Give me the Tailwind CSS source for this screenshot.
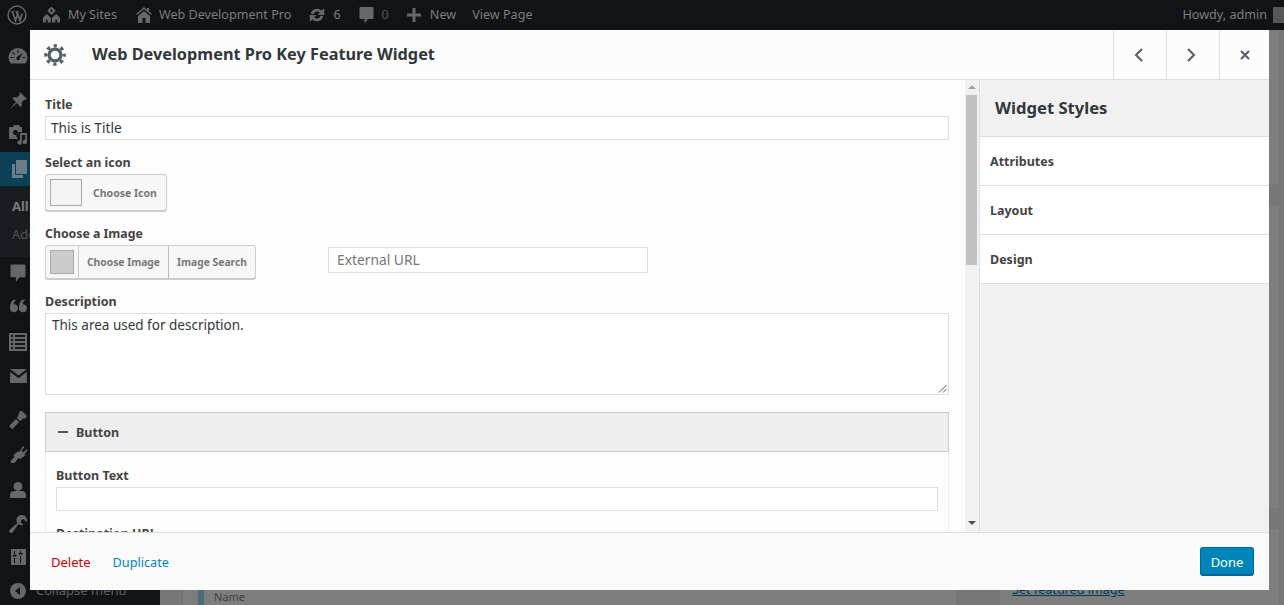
<!DOCTYPE html>
<html lang="en">
<head>
    <meta charset="UTF-8">
    <title>Web Development Pro Key Feature Widget</title>
    <script src="https://cdn.jsdelivr.net/npm/@tailwindcss/browser@4"></script>
</head>
<body class="bg-[#7a7a7a] font-['Noto_Sans',sans-serif] text-[#444]">
<div class="relative h-[605px] w-[1284px] overflow-hidden">

    <!-- admin bar -->
    <header class="flex h-[30px] items-center justify-between bg-[#111417] text-[12.6px] text-[#7a7d80]">
        <div class="flex items-center">
            <svg class="ml-[7px] h-[20px] w-[20px]" viewBox="0 0 20 20" fill="none" stroke="#65686b"><circle cx="10" cy="10" r="9" stroke-width="1.400"/><path d="M5.500 7l3 8.500 2-6-1-2.500M10 7l3 8.500 2.200-7" stroke-width="1.700"/><path d="M4 6.700h3.400M8.400 6.700h3.400" stroke-width="1"/></svg>
            <svg class="ml-[15px] h-[20px] w-[19px]" viewBox="0 0 20 20" fill="#65686b"><path fill-rule="evenodd" d="M10 1l4.500 4.500-4.500 4.500-4.500-4.500zM10 4L8.500 5.500 10 7l1.500-1.500zM5 9l4.300 4v5H1v-5zM4 15v3h2v-3zM15 9l4 4v5h-8.500v-5zM14 15v3h2v-3z"/></svg>
            <span class="ml-[7px]">My Sites</span>
            <svg class="ml-[19px] h-[18px] w-[16px]" viewBox="0 0 16 18" fill="#65686b"><path fill-rule="evenodd" d="M8 1l3 2.600V2h2v3.300l3 2.700-1 1-7-6-7 6-1-1zM8 5l6 5v7H2v-7zM6.500 12v5h3v-5z"/></svg>
            <span class="ml-[7px]">Web Development Pro</span>
            <svg class="ml-[17px] h-[18px] w-[18px]" viewBox="0 0 20 20" fill="#65686b"><path d="M10 3a7 7 0 0 1 5 2.100L18 2.500V10h-7.500l2.700-2.600A4 4 0 0 0 6.300 9H3.200A7 7 0 0 1 10 3zM2 10h7.500l-2.700 2.600A4 4 0 0 0 13.700 11h3.100A7 7 0 0 1 5 14.900L2 17.500z"/></svg>
            <span class="ml-[7px]">6</span>
            <svg class="ml-[18px] h-[18px] w-[15px]" viewBox="0 0 15 18" fill="#65686b"><path d="M1.500 1h12a1 1 0 0 1 1 1v10a1 1 0 0 1-1 1H9l-3.500 4.500V13h-4a1 1 0 0 1-1-1V2a1 1 0 0 1 1-1z"/></svg>
            <span class="ml-[8px] text-[#55585b]">0</span>
            <svg class="ml-[18px] h-[14px] w-[14px]" viewBox="0 0 14 14" fill="#65686b"><path d="M5.500 0h3v5.500H14v3H8.500V14h-3V8.500H0v-3h5.500z"/></svg>
            <span class="ml-[9px]">New</span>
            <span class="ml-[16px]">View Page</span>
        </div>
        <div class="flex items-center">
            <span>Howdy, admin</span>
            <div class="ml-[6px] h-[16px] w-[11px] bg-[#55585b]"></div>
        </div>
    </header>

    <div class="flex h-[575px]">
        <!-- wp sidebar -->
        <aside class="relative w-[160px] shrink-0 bg-[#111417] pt-[9px] text-[#5d6063]">
            <div class="flex h-[34px] items-center pl-[8px]">
                <svg class="h-[20px] w-[20px]" viewBox="0 0 20 20" fill="#65686b"><path fill-rule="evenodd" d="M10 2a9.500 9.500 0 0 1 9.500 9.500c0 2.300-.8 4.300-2.200 6H2.700A9.400 9.400 0 0 1 .5 11.500 9.500 9.500 0 0 1 10 2zM9.500 4v3h1V4zM5 6l-.8.800 2 2 .8-.8zM14.500 7L9 11a1.700 1.700 0 1 0 2.500 2.200zM2.500 11v1h3v-1zM14.500 11v1h3v-1z"/></svg>
            </div>
            <div class="mt-[11px] flex h-[34px] items-center pl-[8px]">
                <svg class="h-[20px] w-[20px]" viewBox="0 0 20 20" fill="#65686b"><path d="M12 1l7 7-1.500 1-1-.5-3 3 .5 3-1.500 1.500L9 12l-7.500 6.500L8 11 4.500 7.500 6 6l3 .5 3-3-.5-1z"/></svg>
            </div>
            <div class="flex h-[34px] items-center pl-[8px]">
                <svg class="h-[22px] w-[20px]" viewBox="0 0 20 22" fill="#65686b"><path fill-rule="evenodd" d="M2 3h3l1-2h5l1 2h2v5h-3a4 4 0 0 0-1 7H2a1 1 0 0 1-1-1V4a1 1 0 0 1 1-1zM7.500 6a2.500 2.500 0 1 0 .01 0zM12 9h7v9a2.200 2.200 0 1 1-1.800-2.200V11h-3.400v7.500a2.200 2.200 0 1 1-1.800-2.200z"/></svg>
            </div>
            <div class="flex h-[34px] items-center bg-[#0b4057] pl-[11px]">
                <svg class="h-[20px] w-[16px]" viewBox="0 0 16 20" fill="#6a7d88"><path d="M5 1h11v14H5z"/><path d="M1 5h3v11h8v3H1z"/></svg>
            </div>
            <div class="flex h-[71px] flex-col bg-[#191d21] pl-[12px] pt-[11px] text-[13px]">
                <span class="h-[20px] font-bold text-[#77797c]">All Pages</span>
                <span class="mt-[8px] text-[#505356]">Add New</span>
            </div>
            <div class="flex h-[32px] items-center pl-[10px]">
                <svg class="h-[20px] w-[16px]" viewBox="0 0 15 18" fill="#65686b"><path d="M1.500 1h12a1 1 0 0 1 1 1v10a1 1 0 0 1-1 1H9l-3.500 4.500V13h-4a1 1 0 0 1-1-1V2a1 1 0 0 1 1-1z"/></svg>
            </div>
            <div class="flex h-[34px] items-center pl-[9px]">
                <svg class="h-[18px] w-[18px]" viewBox="0 0 20 20" fill="#65686b"><path d="M5 3h3a8 8 0 0 0-3 5 4.500 4.500 0 1 1-4 4.500C1 8 2 5 5 3zM15 3h3a8 8 0 0 0-3 5 4.500 4.500 0 1 1-4 4.500C11 8 12 5 15 3z"/></svg>
            </div>
            <div class="mt-[2px] flex h-[34px] items-center pl-[9px]">
                <svg class="h-[18px] w-[18px]" viewBox="0 0 18 18" fill="#65686b"><path fill-rule="evenodd" d="M0 0h18v18H0zM2 2v2h2V2zm4 0v2h10V2zM2 6v2h2V6zm4 0v2h10V6zM2 10v2h2v-2zm4 0v2h10v-2zM2 14v2h2v-2zm4 0v2h10v-2z"/></svg>
            </div>
            <div class="flex h-[34px] items-center pl-[10px]">
                <svg class="h-[14px] w-[17px]" viewBox="0 0 18 15" fill="#65686b"><path d="M0 0h18L9 7zM0 3l9 7 9-7v12H0z"/></svg>
            </div>
            <div class="mt-[10px] flex h-[34px] items-center pl-[9px]">
                <svg class="h-[20px] w-[18px]" viewBox="0 0 18 20" fill="#65686b"><path d="M11 1h2l5 5-2 3-1-1-4 3-3-3zM7 9l3 3-6.500 7L1 17.500l-.5-2z"/></svg>
            </div>
            <div class="mt-[1px] flex h-[34px] items-center pl-[10px]">
                <svg class="h-[20px] w-[18px]" viewBox="0 0 18 20" fill="#65686b"><path d="M13 1l1.500 1-3 3.500 2 2 3-3.500 1 1.500-3 3.500 1 1-5 4-2-1-4 5H1l-.5-2 4-4-1-2 5-4 1 1z"/></svg>
            </div>
            <div class="mt-[1px] flex h-[34px] items-center pl-[10px]">
                <svg class="h-[20px] w-[16px]" viewBox="0 0 18 20" fill="#65686b"><circle cx="9" cy="6" r="5"/><path d="M0 19v-4c0-3 3-4 5-4h8c2 0 5 1 5 4v4z"/></svg>
            </div>
            <div class="flex h-[33px] items-center pl-[9px]">
                <svg class="h-[18px] w-[18px]" viewBox="0 0 18 18" fill="#65686b"><path d="M13 0a5 5 0 0 1 4.500 7l-3-3-2 1-1 2 3 3a5 5 0 0 1-5-1L3.500 17.500A2 2 0 0 1 .5 15l8-7a5 5 0 0 1 4.500-8z"/></svg>
            </div>
            <div class="flex h-[34px] items-center pl-[11px]">
                <svg class="h-[16px] w-[15px]" viewBox="0 0 15 16" fill="#65686b"><path fill-rule="evenodd" d="M0 0h15v16H0zM3 2v4H1.500v1.500h4V6H4V2zm6 0v2H7.500v1.500h4V4H10V2zM3 9v5h1V9zm6-2v7h1V7z"/></svg>
            </div>
            <div class="flex h-[34px] items-center pl-[10px]">
                <svg class="h-[16px] w-[16px]" viewBox="0 0 16 16"><circle cx="8" cy="8" r="8" fill="#65686b"/><path d="M10 4v8L5 8z" fill="#111417"/></svg>
                <span class="ml-[10px] text-[13px]">Collapse menu</span>
            </div>
        </aside>

        <!-- dimmed page behind the dialog -->
        <main class="flex flex-1 bg-[#777777]">
            <div class="w-[23px] border-r border-[#707070]"></div>
            <div class="w-[15px] bg-[#7c7c7c]"></div>
            <div class="flex h-full w-[758px] flex-col justify-end">
                <div class="flex h-[15px] items-center bg-[#7e7e7e]">
                    <span class="h-full w-[6px] bg-[#4f6b78]"></span>
                    <span class="ml-[10px] text-[11px] text-[#404040]">Name</span>
                </div>
            </div>
            <div class="ml-[44px] flex w-[279px] flex-col gap-[21px]">
                <div class="h-[154px] bg-[#7e7e7e]"></div>
                <div class="h-[303px] bg-[#7e7e7e]"></div>
                <div class="flex-1 bg-[#7e7e7e] pl-[12px] pt-[47px]">
                    <span class="text-[12.600px] leading-[16px] text-[#003a55] underline">Set featured image</span>
                </div>
            </div>
        </main>
    </div>

    <!-- widget dialog -->
    <section class="absolute left-[30px] top-[30px] flex h-[560px] w-[1239px] flex-col bg-[#fcfcfc]">
        <div class="flex h-[50px] shrink-0 items-center border-b border-[#dddddd]">
            <svg class="ml-[14px] h-[22px] w-[22px]" viewBox="0 0 24 24" fill="none" stroke="#555d66" stroke-width="3.500"><circle cx="12" cy="12" r="6.500"/><circle cx="12" cy="12" r="10" stroke-dasharray="3.600 4.254" stroke-dashoffset="1.800"/></svg>
            <h1 class="ml-[26px] flex-1 text-[16.300px] font-bold text-[#32373c]">Web Development Pro Key Feature Widget</h1>
            <div class="flex h-full w-[53px] items-center justify-center border-l border-[#dddddd]">
                <svg class="h-[16px] w-[16px]" viewBox="0 0 16 16" fill="none" stroke="#555d66" stroke-width="2"><path d="M10 2L4 8l6 6"/></svg>
            </div>
            <div class="flex h-full w-[53px] items-center justify-center border-l border-[#dddddd]">
                <svg class="h-[16px] w-[16px]" viewBox="0 0 16 16" fill="none" stroke="#555d66" stroke-width="2"><path d="M3 2l6 6-6 6"/></svg>
            </div>
            <div class="flex h-full w-[50px] items-center justify-center border-l border-[#dddddd]">
                <svg class="h-[12px] w-[12px]" viewBox="0 0 12 12" fill="none" stroke="#555d66" stroke-width="2"><path d="M2 2l8 8M10 2l-8 8"/></svg>
            </div>
        </div>

        <div class="flex min-h-0 flex-1">
            <!-- form -->
            <div class="w-[935px] overflow-hidden bg-[#fdfdfd] pl-[15px] pr-[16px]">
                <label class="mt-[17px] block text-[12.500px] font-bold leading-[16px]">Title</label>
                <div class="mt-[3px] flex h-[24px] items-center border border-[#dddddd] bg-white pl-[5px] text-[13.700px] text-[#32373c]">This is Title</div>

                <label class="mt-[15px] block text-[12.500px] font-bold leading-[16px]">Select an icon</label>
                <div class="mt-[3px] flex h-[37px] w-[122px] items-center rounded-[3px] border border-[#cccccc] bg-[#f7f7f7] pl-[4px] shadow-[0_1px_0_#ccc]">
                    <div class="h-[27px] w-[32px] border border-[#aaaaaa] bg-[#f3f3f3]"></div>
                    <span class="ml-[11px] pt-[2px] text-[10.500px] font-bold text-[#777777]">Choose Icon</span>
                </div>

                <label class="mt-[15px] block text-[12.300px] font-bold leading-[16px]">Choose a Image</label>
                <div class="mt-[3px] flex items-start">
                    <div class="flex h-[34px] w-[211px] items-center rounded-[3px] border border-[#cccccc] bg-[#f7f7f7] shadow-[0_1px_0_#ccc]">
                        <div class="flex h-full w-[33px] items-center justify-center border-r border-[#cccccc]">
                            <div class="h-[24px] w-[24px] border border-[#aaaaaa] bg-[#cccccc]"></div>
                        </div>
                        <div class="flex h-full w-[90px] items-center justify-center border-r border-[#bbbbbb] pt-[1px] text-[10.300px] font-bold text-[#777777]">Choose Image</div>
                        <div class="flex h-full flex-1 items-center justify-center pt-[1px] text-[10.300px] font-bold text-[#777777]">Image Search</div>
                    </div>
                    <div class="ml-[72px] mt-[2px] flex h-[26px] w-[320px] items-center border border-[#dddddd] bg-white pl-[8px] text-[13.800px] text-[#72777c]">External URL</div>
                </div>

                <label class="mt-[15px] block text-[12.500px] font-bold leading-[16px]">Description</label>
                <div class="relative mt-[3px] h-[82px] border border-[#dddddd] bg-white pl-[6px] pt-[1px] text-[13.500px] leading-[20px] text-[#32373c]">
                    This area used for description.
                    <svg class="absolute bottom-[1px] right-[1px] h-[9px] w-[9px]" viewBox="0 0 9 9" stroke="#555" fill="none"><path d="M8.500 1L1 8.500M8.500 5L5 8.500"/></svg>
                </div>

                <div class="mt-[17px] border-x border-[#eeeeee]">
                    <div class="-mx-px flex h-[40px] items-center border border-[#cccccc] bg-[#eeeeee]">
                        <span class="ml-[12px] h-[2px] w-[10px] bg-[#555555]"></span>
                        <span class="ml-[8px] pt-[2px] text-[12.500px] font-bold">Button</span>
                    </div>
                    <div class="px-[10px]">
                        <label class="mt-[16px] block text-[12.500px] font-bold leading-[16px]">Button Text</label>
                        <div class="mt-[3px] h-[24px] border border-[#dddddd] bg-white"></div>
                        <label class="mt-[15px] block text-[12.500px] font-bold leading-[16px]">Destination URL</label>
                    </div>
                </div>
            </div>

            <!-- scrollbar -->
            <div class="relative w-[14px] shrink-0 bg-[#f1f1f1]">
                <div class="absolute left-[3px] top-[5px] h-0 w-0 border-x-[4px] border-b-[4px] border-x-transparent border-b-[#a3a3a3]"></div>
                <div class="absolute left-[1px] top-[15px] h-[170px] w-[11px] bg-[#c1c1c1]"></div>
                <div class="absolute bottom-[7px] left-[3px] h-0 w-0 border-x-[4px] border-t-[4px] border-x-transparent border-t-[#505050]"></div>
            </div>

            <!-- styles panel -->
            <div class="flex-1 border-l border-[#dddddd] bg-[#f1f1f1]">
                <div class="flex h-[57px] items-center border-b border-[#dddddd] pl-[15px] text-[16.600px] font-bold text-[#32373c]">Widget Styles</div>
                <div class="flex h-[49px] items-center border-b border-[#dddddd] bg-white pl-[10px] pt-[2px] text-[12.500px] font-bold">Attributes</div>
                <div class="flex h-[49px] items-center border-b border-[#dddddd] bg-white pl-[10px] pt-[2px] text-[12.500px] font-bold">Layout</div>
                <div class="flex h-[49px] items-center border-b border-[#dddddd] bg-white pl-[10px] pt-[2px] text-[12.500px] font-bold">Design</div>
            </div>
        </div>

        <div class="flex h-[58px] shrink-0 items-center justify-between border-t border-[#dddddd] bg-[#fafafa] pl-[21px] pr-[15px] text-[13px]">
            <div class="flex items-center pt-[2px]">
                <span class="text-[#cc0000]">Delete</span>
                <span class="ml-[22px] text-[12.700px] text-[#0085ba]">Duplicate</span>
            </div>
            <button class="h-[29px] w-[54px] rounded-[3px] border border-b-[2px] border-[#006799] bg-[#0085ba] pt-[2px] text-[13px] leading-[20px] text-white">Done</button>
        </div>
    </section>
</div>
</body>
</html>
